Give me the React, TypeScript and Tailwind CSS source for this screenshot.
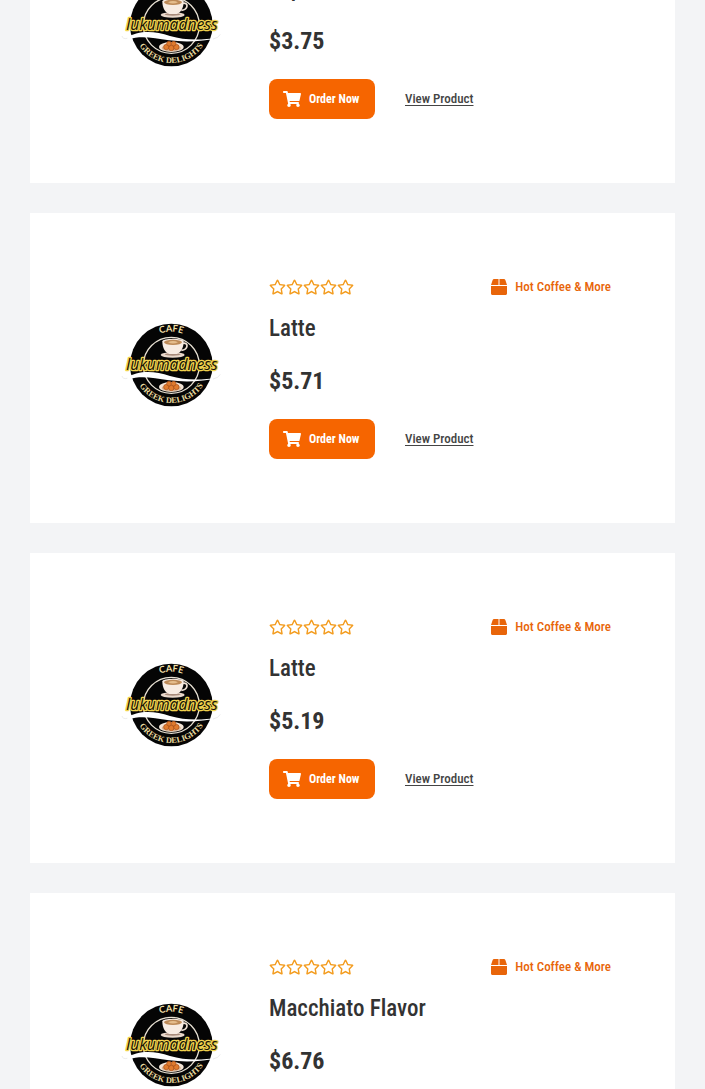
import { type FC } from "react";
import { FaBox, FaRegStar, FaShoppingCart } from "react-icons/fa";

interface Product {
  id: number;
  name: string;
  price: string;
  category: string;
}

const products: Product[] = [
  { id: 1, name: "Espresso", price: "$3.75", category: "Hot Coffee & More" },
  { id: 2, name: "Latte", price: "$5.71", category: "Hot Coffee & More" },
  { id: 3, name: "Latte", price: "$5.19", category: "Hot Coffee & More" },
  {
    id: 4,
    name: "Macchiato Flavor",
    price: "$6.76",
    category: "Hot Coffee & More",
  },
];

const CafeLogo: FC<{ id: number }> = ({ id }) => (
  <svg
    viewBox="6 9 360 330"
    className="w-[120px] h-[110px] shrink-0"
    role="img"
    aria-label="Cafe Lukumadness, Greek Delights"
  >
    <defs>
      <path id={`top-${id}`} d="M86 163 A98 98 0 0 1 282 163" />
      <path id={`bottom-${id}`} d="M70 165 A114 114 0 0 0 298 165" />
    </defs>
    <circle cx="184" cy="165" r="124" fill="#050505" />
    <circle cx="184" cy="166" r="84" fill="none" stroke="#e9e2d4" strokeWidth="4" />

    {/* coffee cup */}
    <ellipse cx="188" cy="135" rx="36" ry="8" fill="#e9d8cb" />
    <ellipse cx="188" cy="133" rx="24" ry="4" fill="#a98c7c" />
    <path
      d="M218 100 C236 96 236 118 214 121"
      fill="none"
      stroke="#f3e4d8"
      strokeWidth="5"
    />
    <path
      d="M157 94 C157 114 166 129 178 132 H200 C212 129 221 114 221 94 Z"
      fill="#f8ece3"
    />
    <ellipse cx="189" cy="94" rx="32" ry="8" fill="#f8ece3" />
    <ellipse cx="189" cy="97" rx="27" ry="8" fill="#bd8a58" />
    <path d="M174 97 Q189 89 204 97 Q189 104 174 97" fill="#e5bd8d" />

    {/* plate */}
    <ellipse cx="184" cy="231" rx="37" ry="15" fill="#f4e5d7" />
    <ellipse cx="184" cy="234" rx="29" ry="10" fill="#d8b08e" />
    <g fill="#e07c2e" stroke="#a94d17" strokeWidth="2">
      <circle cx="169" cy="231" r="8" />
      <circle cx="184" cy="234" r="8" />
      <circle cx="199" cy="231" r="8" />
      <circle cx="177" cy="221" r="7" />
      <circle cx="191" cy="221" r="7" />
    </g>

    {/* swoosh */}
    <path
      d="M42 206 C92 178 133 184 180 198 C225 211 270 211 326 203 C278 215 226 217 177 211 C129 203 92 196 54 208 Z"
      fill="#fff"
    />
    <path
      d="M36 198 Q38 208 52 205 M309 207 Q326 204 331 193"
      fill="none"
      stroke="#ececec"
      strokeWidth="3"
    />

    <text
      fill="#f0dfa4"
      fontFamily="Lato, sans-serif"
      fontSize="28"
      fontWeight="700"
      textAnchor="middle"
    >
      <textPath href={`#top-${id}`} startOffset="50%">
        CAFE
      </textPath>
    </text>
    <text
      fill="#eadb9f"
      fontFamily="Liberation Serif, serif"
      fontSize="25"
      fontWeight="700"
      textAnchor="middle"
    >
      <textPath href={`#bottom-${id}`} startOffset="50%">
        GREEK DELIGHTS
      </textPath>
    </text>
    <text
      x="186"
      y="179"
      fill="#161205"
      stroke="#f0d34e"
      strokeWidth="8"
      strokeLinejoin="round"
      paintOrder="stroke"
      fontFamily="Open Sans, sans-serif"
      fontSize="47"
      fontStyle="italic"
      fontWeight="500"
      textAnchor="middle"
    >
      lukumadness
    </text>
  </svg>
);

const Rating = () => (
  <div className="flex text-[#f39c1f]" role="img" aria-label="Not rated yet">
    {[1, 2, 3, 4, 5].map((star) => (
      <FaRegStar key={star} className="w-[17px] h-4" />
    ))}
  </div>
);

const ProductCard: FC<{ product: Product }> = ({ product }) => (
  <article className="grid grid-cols-[155px_1fr] gap-5 bg-white p-16">
    <div className="flex items-center justify-center">
      <CafeLogo id={product.id} />
    </div>

    <div className="min-w-0">
      <div className="flex items-center justify-between h-5">
        <Rating />
        <a
          href="#category"
          className="flex items-center gap-2 text-[13px] leading-4 font-medium text-[#e8650a]"
        >
          <FaBox className="w-4 h-4" />
          {product.category}
        </a>
      </div>
      <h2 className="mt-4 text-[23px] leading-8 font-medium text-[#333333]">
        {product.name}
      </h2>
      <p className="mt-5 text-2xl leading-8 font-bold text-[#333333]">
        {product.price}
      </p>
      <div className="flex items-center gap-[30px] mt-[22px]">
        <button
          type="button"
          className="flex items-center gap-2 w-[106px] h-10 pl-3.5 rounded-lg bg-[#f66500] text-xs font-bold text-white cursor-pointer"
        >
          <FaShoppingCart className="w-[18px] h-4" />
          Order Now
        </button>
        <a
          href="#product"
          className="text-[13px] leading-4 font-medium text-[#444444] underline underline-offset-2"
        >
          View Product
        </a>
      </div>
    </div>
  </article>
);

export default function App() {
  return (
    <main className="h-screen overflow-hidden bg-[#f3f4f6] font-['Roboto_Condensed','Liberation_Sans_Narrow',sans-serif]">
      <div className="flex flex-col gap-[30px] px-[30px] -mt-[127px]">
        {products.map((product) => (
          <ProductCard key={product.id} product={product} />
        ))}
      </div>
    </main>
  );
}
